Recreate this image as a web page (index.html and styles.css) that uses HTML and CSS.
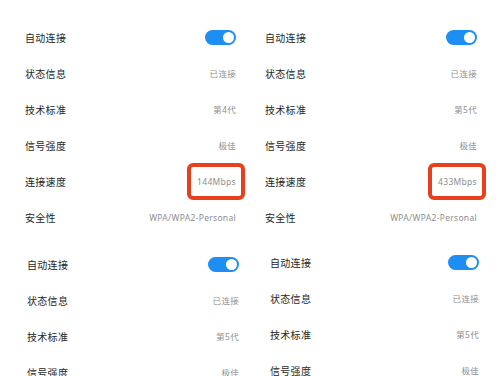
FILE: index.html
```html
<!DOCTYPE html>
<html lang="zh-CN">
<head>
    <meta charset="UTF-8">
    <meta name="viewport" content="width=device-width, initial-scale=1.0">
    <title>WLAN 详情</title>
    <link rel="stylesheet" href="styles.css">
</head>
<body>
    <div class="collage">
        <div class="panel panel-tl">
            <div class="row"><span class="label">自动连接</span><span class="toggle"></span></div>
            <div class="row"><span class="label">状态信息</span><span class="value">已连接</span></div>
            <div class="row"><span class="label">技术标准</span><span class="value">第4代</span></div>
            <div class="row"><span class="label">信号强度</span><span class="value">极佳</span></div>
            <div class="row"><span class="label">连接速度</span><span class="value marked">144Mbps</span></div>
            <div class="row"><span class="label">安全性</span><span class="value">WPA/WPA2-Personal</span></div>
        </div>
        <div class="panel panel-tr">
            <div class="row"><span class="label">自动连接</span><span class="toggle"></span></div>
            <div class="row"><span class="label">状态信息</span><span class="value">已连接</span></div>
            <div class="row"><span class="label">技术标准</span><span class="value">第5代</span></div>
            <div class="row"><span class="label">信号强度</span><span class="value">极佳</span></div>
            <div class="row"><span class="label">连接速度</span><span class="value marked">433Mbps</span></div>
            <div class="row"><span class="label">安全性</span><span class="value">WPA/WPA2-Personal</span></div>
        </div>
        <div class="panel panel-bl">
            <div class="row"><span class="label">自动连接</span><span class="toggle"></span></div>
            <div class="row"><span class="label">状态信息</span><span class="value">已连接</span></div>
            <div class="row"><span class="label">技术标准</span><span class="value">第5代</span></div>
            <div class="row"><span class="label">信号强度</span><span class="value">极佳</span></div>
        </div>
        <div class="panel panel-br">
            <div class="row"><span class="label">自动连接</span><span class="toggle"></span></div>
            <div class="row"><span class="label">状态信息</span><span class="value">已连接</span></div>
            <div class="row"><span class="label">技术标准</span><span class="value">第5代</span></div>
            <div class="row"><span class="label">信号强度</span><span class="value">极佳</span></div>
        </div>
    </div>
</body>
</html>
```

FILE: styles.css
```css
body {
    margin: 0;
    background: #fff;
    font-family: "Noto Sans", "Noto Sans CJK SC", sans-serif;
    color: #222;
    overflow: hidden;
}
.collage {
    display: grid;
    grid-template-columns: 252px 252px;
    width: 504px;
    height: 376px;
    overflow: hidden;
}
.panel {
    display: flex;
    flex-direction: column;
}
.panel-tl {
    padding: 19px 16px 0 25px;
}
.panel-tr {
    padding: 19px 27px 0 13px;
}
.panel-bl {
    padding: 11px 13px 0 27px;
}
.panel-br {
    padding: 9px 25px 0 18px;
}
.row {
    height: 36px;
    display: flex;
    align-items: center;
    justify-content: space-between;
}
.label {
    font-size: 10px;
    letter-spacing: 0.3px;
    color: #262626;
}
.value {
    font-size: 8.5px;
    letter-spacing: 0.3px;
    color: #8e8e8e;
}
.marked {
    position: relative;
}
.marked::after {
    content: "";
    position: absolute;
    left: -10px;
    right: -9px;
    top: -13px;
    bottom: -13px;
    border: 4px solid #e6411c;
    border-radius: 6px;
}
.toggle {
    position: relative;
    width: 31px;
    height: 15px;
    border-radius: 8px;
    background: #1e8ff2;
}
.toggle::after {
    content: "";
    position: absolute;
    right: 2px;
    top: 2px;
    width: 11px;
    height: 11px;
    border-radius: 50%;
    background: #fff;
}
```
